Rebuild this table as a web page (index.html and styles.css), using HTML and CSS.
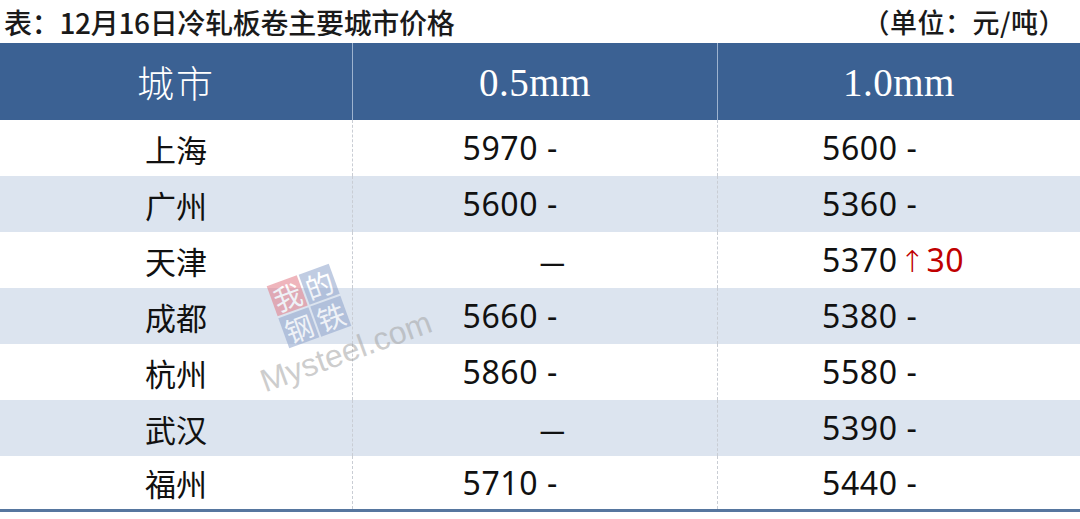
FILE: index.html
```html
<!DOCTYPE html>
<html lang="zh">
<head>
<meta charset="utf-8">
<link rel="stylesheet" href="styles.css">
</head>
<body>
<div class="page">
  <div class="caption">
    <span class="title">表：12月16日冷轧板卷主要城市价格</span>
    <span class="unit">（单位：元/吨）</span>
  </div>
  <div class="table">
    <div class="row head">
      <div class="hcell">城市</div>
      <div class="hcell hnum">0.5mm</div>
      <div class="hcell hnum">1.0mm</div>
    </div>
    <div class="row">
      <div class="cell c1">上海</div>
      <div class="cell c2">5970 -</div>
      <div class="cell c3">5600 -</div>
    </div>
    <div class="row alt">
      <div class="cell c1">广州</div>
      <div class="cell c2">5600 -</div>
      <div class="cell c3">5360 -</div>
    </div>
    <div class="row">
      <div class="cell c1">天津</div>
      <div class="cell c2"><span class="none">—</span></div>
      <div class="cell c3">5370<span class="up"><span class="arrow">↑</span>30</span></div>
    </div>
    <div class="row alt">
      <div class="cell c1">成都</div>
      <div class="cell c2">5660 -</div>
      <div class="cell c3">5380 -</div>
    </div>
    <div class="row">
      <div class="cell c1">杭州</div>
      <div class="cell c2">5860 -</div>
      <div class="cell c3">5580 -</div>
    </div>
    <div class="row alt">
      <div class="cell c1">武汉</div>
      <div class="cell c2"><span class="none">—</span></div>
      <div class="cell c3">5390 -</div>
    </div>
    <div class="row last">
      <div class="cell c1">福州</div>
      <div class="cell c2">5710 -</div>
      <div class="cell c3">5440 -</div>
    </div>
    <div class="watermark">
      <div class="logo">
        <span class="sq red">我</span><span class="sq">的</span>
        <span class="sq">钢</span><span class="sq">铁</span>
      </div>
      <div class="site">Mysteel.com</div>
    </div>
  </div>
</div>
</body>
</html>
```

FILE: styles.css
```css
html, body {
  margin: 0;
  padding: 0;
  background: #ffffff;
}

.page {
  width: 1080px;
  height: 519px;
  overflow: hidden;
  font-family: "Noto Sans", "Noto Sans CJK SC", sans-serif;
  color: #111;
}

.caption {
  height: 43px;
  display: flex;
  justify-content: space-between;
  align-items: center;
  padding: 0 14px 0 4px;
  font-family: "Noto Sans CJK SC", sans-serif;
  font-size: 28px;
  font-weight: 500;
  color: #1a1a1a;
  line-height: 1;
}

.title {
  letter-spacing: -0.3px;
}

.unit {
  font-size: 27px;
  letter-spacing: 0.5px;
}

.table {
  position: relative;
}

.row {
  display: grid;
  grid-template-columns: 352px 365px 363px;
  height: 56px;
  background: #ffffff;
}

.row.alt {
  background: #dce4ef;
}

.row.last {
  height: 53px;
  border-bottom: 3px solid #56769f;
}

.row.head {
  height: 77px;
  background: #3b6193;
  color: #ffffff;
}

.hcell {
  display: flex;
  align-items: center;
  justify-content: center;
  font-family: "Noto Sans CJK SC", serif;
  font-weight: 300;
  font-size: 37px;
  letter-spacing: 2px;
  line-height: 1;
  padding-top: 2px;
}

.hcell + .hcell {
  border-left: 1px solid #9db3cf;
}

.hnum {
  font-family: "Liberation Serif", serif;
  font-weight: 400;
  font-size: 39px;
  letter-spacing: 0.5px;
}

.cell {
  display: flex;
  align-items: center;
  font-size: 32px;
  line-height: 1;
}

.c1 {
  justify-content: center;
  font-family: "Noto Sans CJK SC", sans-serif;
}

.cell.c1 {
  font-size: 31px;
}

.c2 {
  justify-content: flex-end;
  padding-right: 159px;
  border-left: 1px dashed #c9cdd4;
  letter-spacing: 0.6px;
}

.c3 {
  justify-content: flex-start;
  padding-left: 104px;
  border-left: 1px dashed #c9cdd4;
  letter-spacing: 0.6px;
}

.none {
  margin-right: -8px;
  font-family: "Noto Sans CJK SC", sans-serif;
  font-size: 29px;
  font-weight: 500;
}

.up {
  color: #c00000;
}

.arrow {
  font-family: "DejaVu Sans", sans-serif;
  font-weight: 300;
  font-size: 30px;
  margin: 0 1px 0 2px;
}

.watermark {
  position: absolute;
  left: 264px;
  top: 222px;
  width: 180px;
  height: 140px;
  opacity: 0.55;
  pointer-events: none;
}

.logo {
  position: absolute;
  left: 12px;
  top: 8px;
  display: grid;
  grid-template-columns: 32px 32px;
  grid-template-rows: 32px 32px;
  gap: 2px;
  transform: rotate(-20deg);
}

.sq {
  display: flex;
  align-items: center;
  justify-content: center;
  background: #8ea3cc;
  color: #ffffff;
  font-family: "Noto Sans CJK SC", serif;
  font-size: 28px;
  line-height: 1;
}

.sq.red {
  background: #e27a86;
}

.site {
  position: absolute;
  left: 4px;
  top: 98px;
  font-family: "Liberation Sans", sans-serif;
  font-weight: 400;
  font-size: 32px;
  color: #a5a5a5;
  transform: rotate(-20deg);
  transform-origin: left bottom;
  white-space: nowrap;
}
```
